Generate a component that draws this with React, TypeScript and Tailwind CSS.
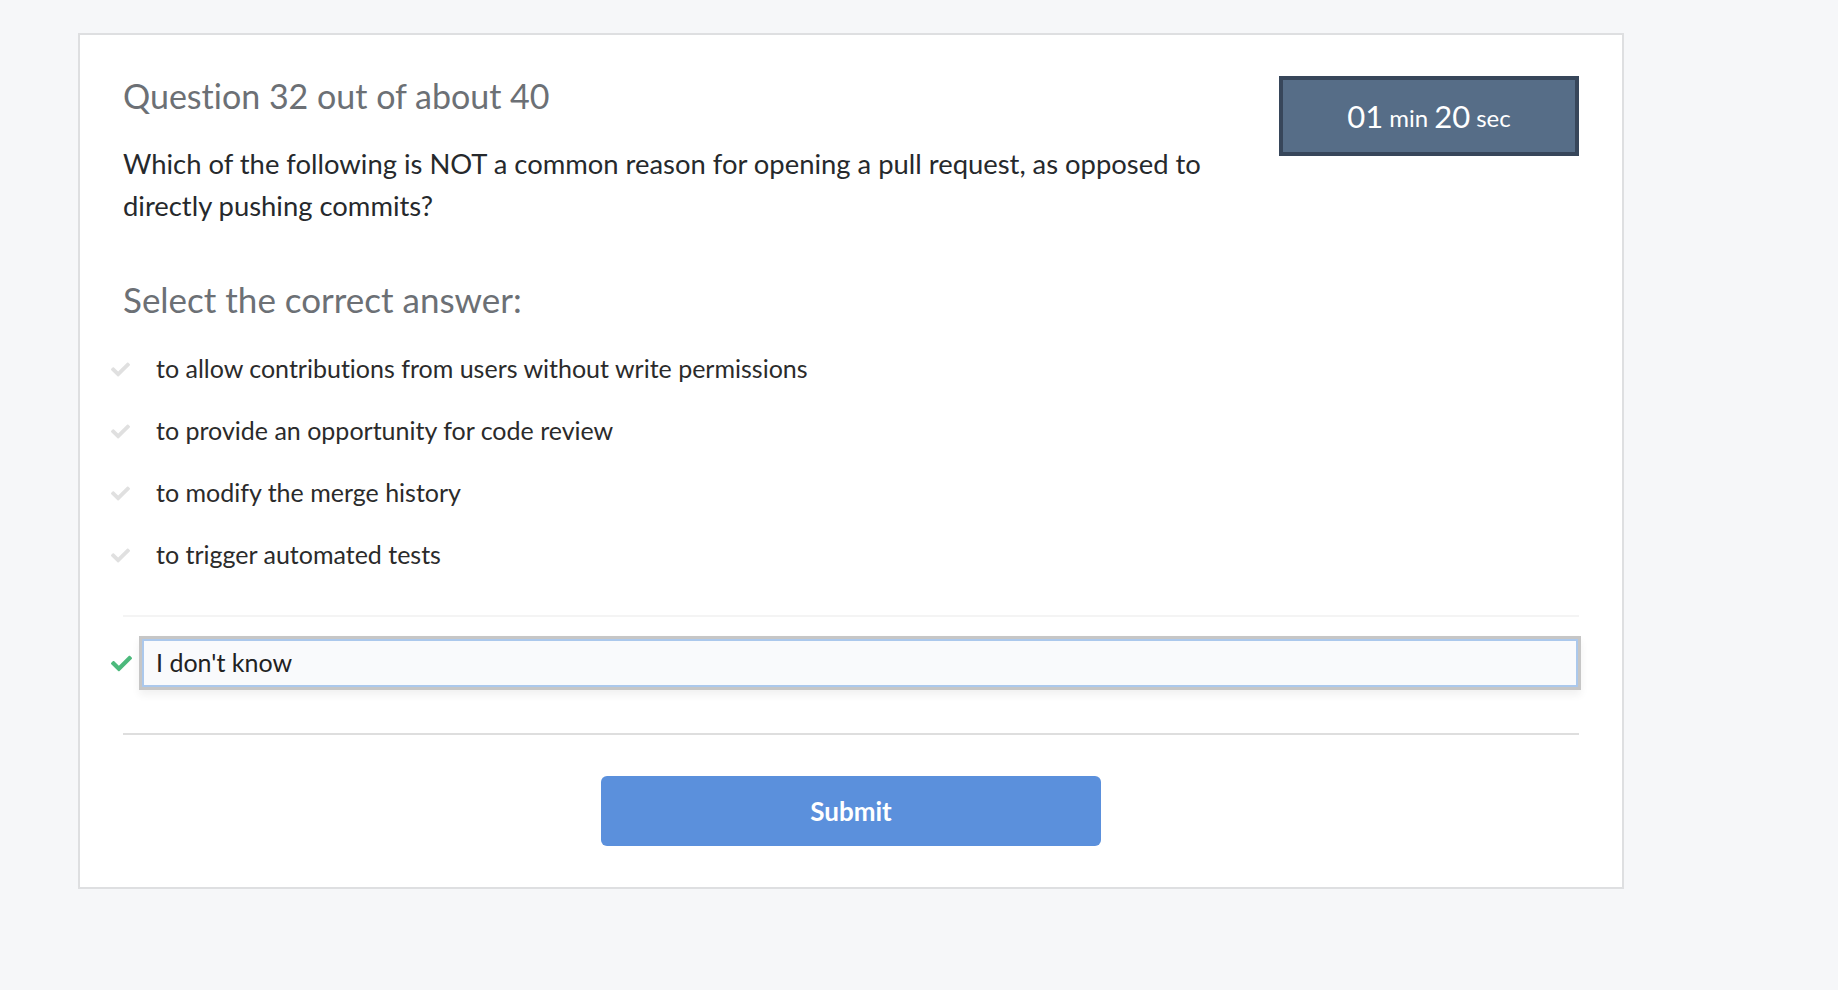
import React, { useState } from 'react';
import { FaCheck } from 'react-icons/fa';

const answers = [
  'to allow contributions from users without write permissions',
  'to provide an opportunity for code review',
  'to modify the merge history',
  'to trigger automated tests',
];

export default function App() {
  const [selected] = useState<number | null>(null);

  return (
    <div className="min-h-screen bg-[#f6f7f9] font-['Lato',sans-serif] [font-variant-ligatures:none] pt-[33px] pl-[78px]">
      <div className="w-[1546px] h-[856px] bg-white border-2 border-[#dedfe1] px-[43px] pt-[41px]">
        {/* header */}
        <div className="flex justify-between items-start">
          <div className="w-[1120px]">
            <h1 className="text-[34px] leading-[40px] text-[#6c7075]">Question 32 out of about 40</h1>
            <p className="mt-[27px] text-[27.4px] leading-[42px] text-[#26292c]">
              Which of the following is NOT a common reason for opening a pull request, as opposed to directly pushing commits?
            </p>
          </div>
          <div className="w-[300px] h-[80px] bg-[#566d87] border-4 border-[#37465a] flex items-center justify-center text-white">
            <span className="text-[31px]">01</span>
            <span className="text-[24px] ml-[6px] mt-[4px]">min</span>
            <span className="text-[31px] ml-[6px]">20</span>
            <span className="text-[24px] ml-[6px] mt-[4px]">sec</span>
          </div>
        </div>

        <h2 className="mt-[52px] text-[35px] leading-[40px] text-[#6c7075]">Select the correct answer:</h2>

        <ul className="mt-[19px]">
          {answers.map((a, i) => (
            <li key={a} className="flex items-center h-[62px] -ml-[12px]">
              <span className="w-[28px] flex justify-start">
                <FaCheck className={selected === i ? 'text-[#4cb97c] w-[19px] h-[19px]' : 'text-[#e0e0e0] w-[19px] h-[19px]'} />
              </span>
              <span className="pl-[17px] text-[25px] text-[#2b2b2b]">{a}</span>
            </li>
          ))}
        </ul>

        <div className="mt-[29px] border-t-2 border-[#f4f4f4]" />

        <div className="mt-[19px] flex items-center -ml-[12px] -mr-[2px]">
          <span className="w-[28px] flex justify-start">
            <FaCheck className="text-[#4cb97c] w-[21px] h-[21px]" />
          </span>
          <div className="flex-1 h-[54px] flex items-center bg-[#f9fafc] border-[3px] border-[#c6c6c6] shadow-[inset_0_0_0_2px_#abc8ec,0_5px_8px_rgba(0,0,0,0.06)] pl-[14px] text-[25px] text-[#222]">
            I don't know
          </div>
        </div>

        <div className="mt-[43px] border-t-2 border-[#dedede]" />

        <div className="mt-[41px] flex justify-center">
          <button className="w-[500px] h-[70px] rounded-[6px] bg-[#5b90dc] text-white text-[26px] font-bold">
            Submit
          </button>
        </div>
      </div>
    </div>
  );
}
